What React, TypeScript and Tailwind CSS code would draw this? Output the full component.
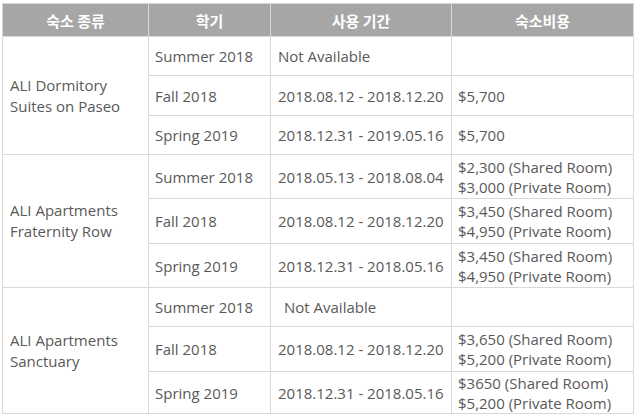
import React from "react";

// ─── Data ────────────────────────────────────────────────────────────────────

interface Term {
  term: string;
  period: string;
  cost: string[];
  h: string;
  indent?: boolean;
}

interface Housing {
  name: string[];
  terms: Term[];
}

const housings: Housing[] = [
  {
    name: ["ALI Dormitory", "Suites on Paseo"],
    terms: [
      { term: "Summer 2018", period: "Not Available", cost: [], h: "h-[39px]" },
      { term: "Fall 2018", period: "2018.08.12 - 2018.12.20", cost: ["$5,700"], h: "h-[40px]" },
      { term: "Spring 2019", period: "2018.12.31 - 2019.05.16", cost: ["$5,700"], h: "h-[39px]" },
    ],
  },
  {
    name: ["ALI Apartments", "Fraternity Row"],
    terms: [
      { term: "Summer 2018", period: "2018.05.13 - 2018.08.04", cost: ["$2,300 (Shared Room)", "$3,000 (Private Room)"], h: "h-[44px]" },
      { term: "Fall 2018", period: "2018.08.12 - 2018.12.20", cost: ["$3,450 (Shared Room)", "$4,950 (Private Room)"], h: "h-[45px]" },
      { term: "Spring 2019", period: "2018.12.31 - 2018.05.16", cost: ["$3,450 (Shared Room)", "$4,950 (Private Room)"], h: "h-[44px]" },
    ],
  },
  {
    name: ["ALI Apartments", "Sanctuary"],
    terms: [
      { term: "Summer 2018", period: "Not Available", cost: [], h: "h-[39px]", indent: true },
      { term: "Fall 2018", period: "2018.08.12 - 2018.12.20", cost: ["$3,650 (Shared Room)", "$5,200 (Private Room)"], h: "h-[45px]" },
      { term: "Spring 2019", period: "2018.12.31 - 2018.05.16", cost: ["$3650 (Shared Room)", "$5,200 (Private Room)"], h: "h-[42px]" },
    ],
  },
];

const cell = "border border-[#d9d9d9] align-middle text-left font-normal";

// ─── Table ───────────────────────────────────────────────────────────────────

export default function App() {
  return (
    <div
      className="w-[640px] h-[420px] bg-white pl-[2px] pt-[3px] text-[15px] text-[#595959]"
      style={{ fontFamily: '"Open Sans", "Noto Sans CJK KR", sans-serif' }}
    >
      <table className="table-fixed border-collapse w-[631px]">
        <colgroup>
          <col className="w-[146px]" />
          <col className="w-[122px]" />
          <col className="w-[181px]" />
          <col className="w-[182px]" />
        </colgroup>
        <thead>
          <tr className="h-[33px] bg-[#a6a6a6]">
            {["숙소 종류", "학기", "사용 기간", "숙소비용"].map((t) => (
              <th
                key={t}
                className="border border-[#d9d9d9] text-center text-white font-bold text-[15px] leading-none"
                style={{ fontFamily: '"Noto Sans CJK KR", sans-serif' }}
              >
                {t}
              </th>
            ))}
          </tr>
        </thead>
        <tbody>
          {housings.map((hs) =>
            hs.terms.map((t, i) => (
              <tr key={hs.name[0] + hs.name[1] + t.term} className={t.h}>
                {i === 0 && (
                  <td rowSpan={3} className={`${cell} pl-[7px] leading-[21px]`}>
                    {hs.name[0]}
                    <br />
                    {hs.name[1]}
                  </td>
                )}
                <td className={`${cell} pl-[6px] leading-[20px]`}>{t.term}</td>
                <td className={`${cell} ${t.indent ? "pl-[13px]" : "pl-[7px]"} leading-[20px] whitespace-nowrap`}>
                  {t.period}
                </td>
                <td className={`${cell} pl-[6px] leading-[20px] whitespace-nowrap`}>
                  {t.cost.map((c) => (
                    <div key={c}>{c}</div>
                  ))}
                </td>
              </tr>
            ))
          )}
        </tbody>
      </table>
    </div>
  );
}
